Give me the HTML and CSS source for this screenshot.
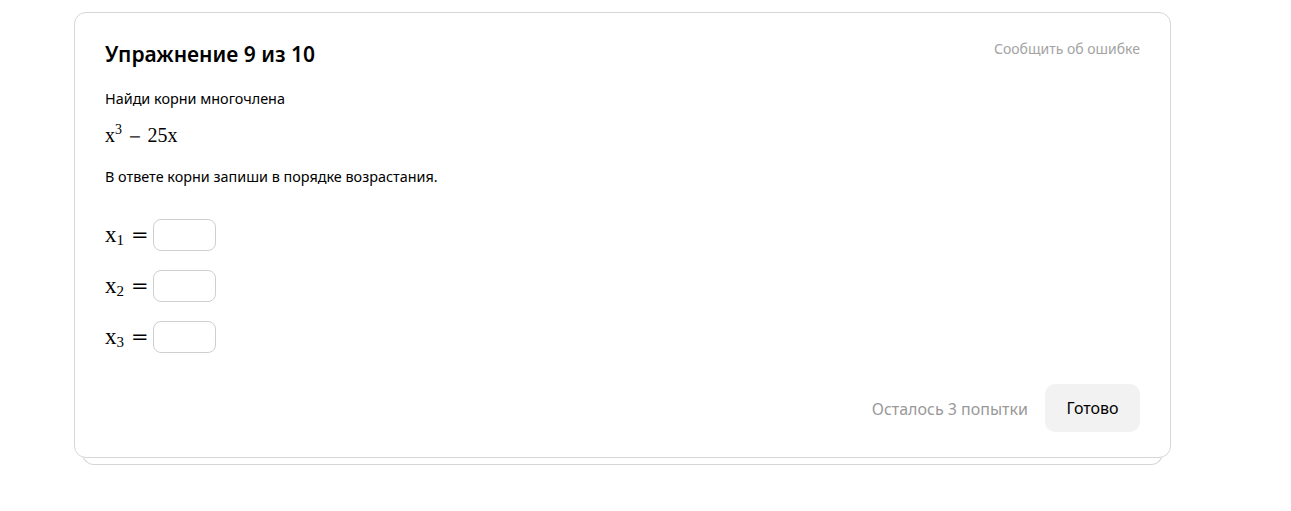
FILE: index.html
```html
<!DOCTYPE html>
<html>
<head>
  <meta charset="UTF-8">
  <title>Упражнение</title>
  <link rel="stylesheet" href="styles.css">
</head>
<body>
<div class="wrap">
  <div class="card">
    <div class="head">
      <h1>Упражнение 9 из 10</h1>
      <a class="report" href="#">Сообщить об ошибке</a>
    </div>
    <p class="txt">Найди корни многочлена</p>
    <p class="math poly">x<sup>3</sup><span class="op">−</span>25x</p>
    <p class="txt">В ответе корни запиши в порядке возрастания.</p>
    <div class="answers">
      <div class="row"><span class="math">x<sub>1</sub><span class="eq">=</span></span><input type="text"></div>
      <div class="row"><span class="math">x<sub>2</sub><span class="eq">=</span></span><input type="text"></div>
      <div class="row"><span class="math">x<sub>3</sub><span class="eq">=</span></span><input type="text"></div>
    </div>
    <div class="foot">
      <span class="left">Осталось 3 попытки</span>
      <button>Готово</button>
    </div>
  </div>
  <div class="under"></div>
</div>
</body>
</html>
```

FILE: styles.css
```css
*{margin:0;padding:0;box-sizing:border-box;}
body{
  background:#fff;
  color:#000;
  font-family:"Noto Sans","Open Sans",sans-serif;
}
.wrap{width:1097px;margin:12px 0 0 74px;}
.card{
  position:relative;
  z-index:1;
  background:#fff;
  border:1px solid #d6d6d6;
  border-radius:12px;
  padding:26px 30px 25px 30px;
  height:446px;
}
.under{
  height:20px;
  margin:-13px 8px 0 8px;
  border:1px solid #d6d6d6;
  border-top:none;
  border-radius:0 0 12px 12px;
}
.head{display:flex;justify-content:space-between;align-items:flex-start;}
h1{font-size:21px;font-weight:600;line-height:30px;}
.report{color:#a3a3a3;font-size:14px;text-decoration:none;line-height:20px;}
.txt{font-size:14.4px;line-height:20px;}
.head + .txt{margin-top:20px;}
.math{font-family:"Liberation Serif",serif;}
.poly{margin:14px 0 18px;line-height:24px;font-size:20px;}
.poly sup{font-size:14px;vertical-align:8px;line-height:0;}
.op{font-family:"DejaVu Serif",serif;font-size:16px;margin:0 6px;color:#222;}
.answers{margin-top:32px;display:flex;flex-direction:column;gap:19px;}
.row{display:flex;align-items:center;}
.row .math{font-size:23px;width:48px;line-height:32px;}
.row sub{font-size:15px;vertical-align:-3px;line-height:0;}
.eq{font-family:"DejaVu Serif",serif;font-size:21px;margin-left:7px;}
input{
  width:63px;height:32px;
  border:1px solid #cfcfcf;
  border-radius:8px;
  outline:none;
}
.foot{display:flex;justify-content:flex-end;align-items:center;margin-top:31px;}
.left{color:#999;font-size:16px;margin-right:17px;margin-top:2px;}
button{
  background:#f2f2f2;
  border:none;
  border-radius:10px;
  width:95px;height:48px;
  font-family:"Noto Sans","Open Sans",sans-serif;
  font-size:16px;
  color:#000;
}
```
